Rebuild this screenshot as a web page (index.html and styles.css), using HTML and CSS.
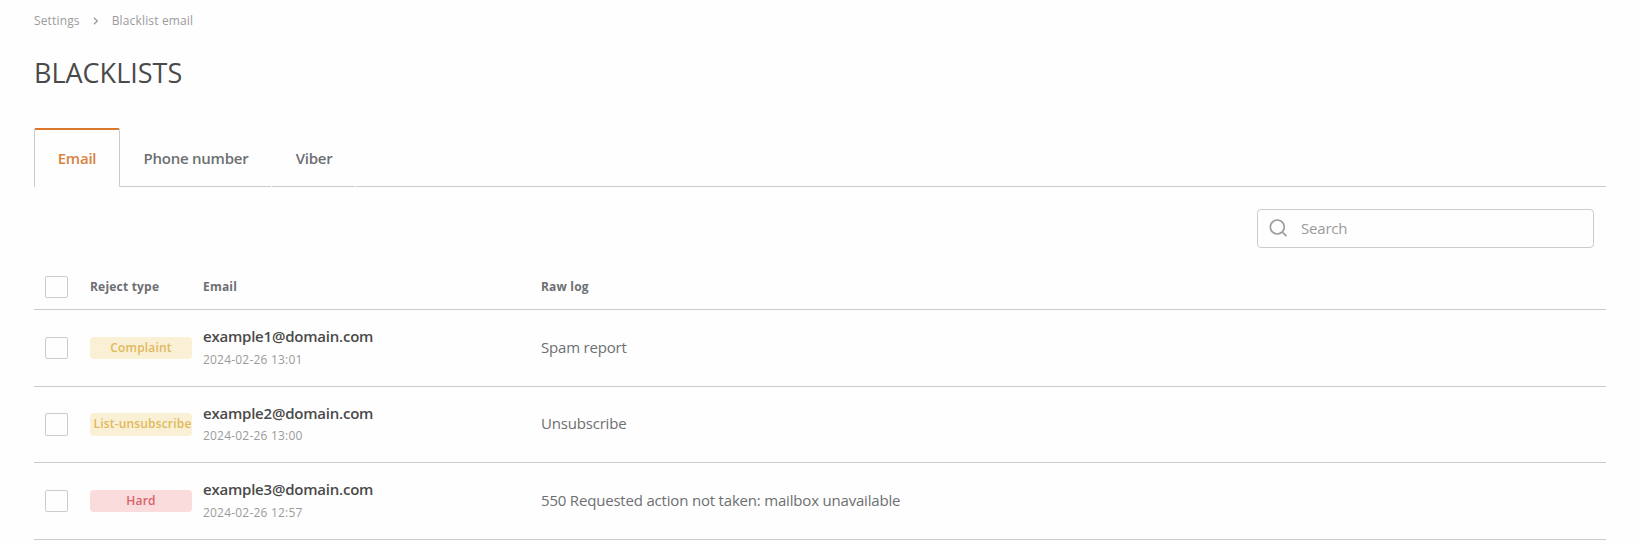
FILE: index.html
```html
<!DOCTYPE html>
<html lang="en">
<head>
<meta charset="utf-8">
<title>Blacklists</title>
<link rel="stylesheet" href="styles.css">
</head>
<body>
<main class="page">
  <nav class="breadcrumb">
    <span>Settings</span>
    <svg class="chevron" width="6" height="8" viewBox="0 0 6 8"><path d="M1 0.8 4.3 4 1 7.2" fill="none" stroke="currentColor" stroke-width="1.3"/></svg>
    <span>Blacklist email</span>
  </nav>
  <h1 class="title">BLACKLISTS</h1>
  <div class="tabs">
    <div class="tab tab-active">Email</div>
    <div class="tab tab-phone">Phone number</div>
    <div class="tab tab-viber">Viber</div>
    <div class="tabs-rest"></div>
  </div>
  <div class="toolbar">
    <label class="search">
      <svg width="18" height="18" viewBox="0 0 18 18" fill="none" stroke="#9b9b9b" stroke-width="1.7"><circle cx="8.3" cy="8" r="7"/><path d="m13.2 13 4.2 4.2"/></svg>
      <span>Search</span>
    </label>
  </div>
  <section class="table">
    <div class="row head">
      <span class="check"></span><span class="th">Reject type</span><span class="th">Email</span><span class="th">Raw log</span>
    </div>
    <div class="row">
      <span class="check"></span><span class="badge">Complaint</span>
      <div class="contact"><div class="mail">example1@domain.com</div><div class="date">2024-02-26 13:01</div></div>
      <span class="log">Spam report</span>
    </div>
    <div class="row row-mid">
      <span class="check"></span><span class="badge">List-unsubscribe</span>
      <div class="contact"><div class="mail">example2@domain.com</div><div class="date">2024-02-26 13:00</div></div>
      <span class="log">Unsubscribe</span>
    </div>
    <div class="row">
      <span class="check"></span><span class="badge badge-hard">Hard</span>
      <div class="contact"><div class="mail">example3@domain.com</div><div class="date">2024-02-26 12:57</div></div>
      <span class="log">550 Requested action not taken: mailbox unavailable</span>
    </div>
  </section>
</main>
</body>
</html>
```
FILE: styles.css
```css
* { box-sizing: border-box; }
body { margin: 0; background: #fefefe; font-family: "Open Sans", sans-serif; color: #6d6f72; }
.page { width: 1606px; padding-left: 34px; }
.breadcrumb { display: flex; align-items: center; height: 42px; font-size: 12px; line-height: 16px; letter-spacing: 0.15px; color: #9b9b9b; }
.chevron { margin: 0 13px 0 13px; }
.title { margin: 0; height: 86px; padding: 13px 0 0; font-size: 27px; line-height: 36px; font-weight: 400; color: #4a4a4a; }
.tabs { display: flex; height: 59px; font-size: 15px; font-weight: 600; line-height: 20px; letter-spacing: -0.25px; }
.tab { padding-top: 20px; text-align: center; border-bottom: 1px solid #cbcccc; }
.tab-active { width: 86px; padding-top: 18px; color: #d9813d; border: 1px solid #cbcccc; border-top: 2px solid #d9782d; border-bottom: 0; border-radius: 2px 2px 0 0; }
.tab-phone { width: 151px; padding-left: 1px; margin-right: 1px; }
.tab-viber { width: 83px; padding-left: 1px; margin-right: 1px; }
.tabs-rest { flex: 1; border-bottom: 1px solid #cbcccc; }
.toolbar { display: flex; justify-content: flex-end; height: 76px; padding: 22px 12px 0 0; }
.search { display: flex; align-items: center; gap: 14px; width: 337px; height: 39px; padding: 0 0 2px 11px; border: 1px solid #cbcccc; border-radius: 4px; font-size: 15px; letter-spacing: -0.19px; color: #9b9b9b; }
.row { display: grid; grid-template-columns: 34px 102px 327px 1fr; column-gap: 11px; align-items: center; height: 77px; padding-left: 11px; border-bottom: 1px solid #cbcccc; }
.row-mid { height: 76px; }
.head { height: 47px; padding-top: 1px; font-size: 12px; font-weight: 700; letter-spacing: 0.2px; }
.check { width: 23px; height: 22px; border: 1px solid #cbcccc; border-radius: 2px; }
.badge { height: 22px; border-radius: 4px; background: #faf0d6; color: #e0b95c; font-size: 12px; font-weight: 600; line-height: 21px; letter-spacing: 0.17px; text-align: center; white-space: nowrap; }
.row-mid .check, .row-mid .badge { height: 23px; }
.row-mid .badge { padding-left: 3px; }
.badge-hard { background: #fbdcdd; color: #d9626a; }
.contact { padding-bottom: 2px; }
.mail { font-size: 15px; font-weight: 600; line-height: 20px; letter-spacing: -0.22px; color: #4a4a4a; }
.date { font-size: 12px; line-height: 16px; margin-top: 6px; letter-spacing: 0.2px; color: #9b9b9b; }
.row-mid .contact { padding-bottom: 3px; }
.row-mid .date { margin-top: 5px; }
.log { padding-bottom: 2px; font-size: 15px; line-height: 20px; letter-spacing: -0.19px; }
.row-mid .log { padding-bottom: 3px; }
```
